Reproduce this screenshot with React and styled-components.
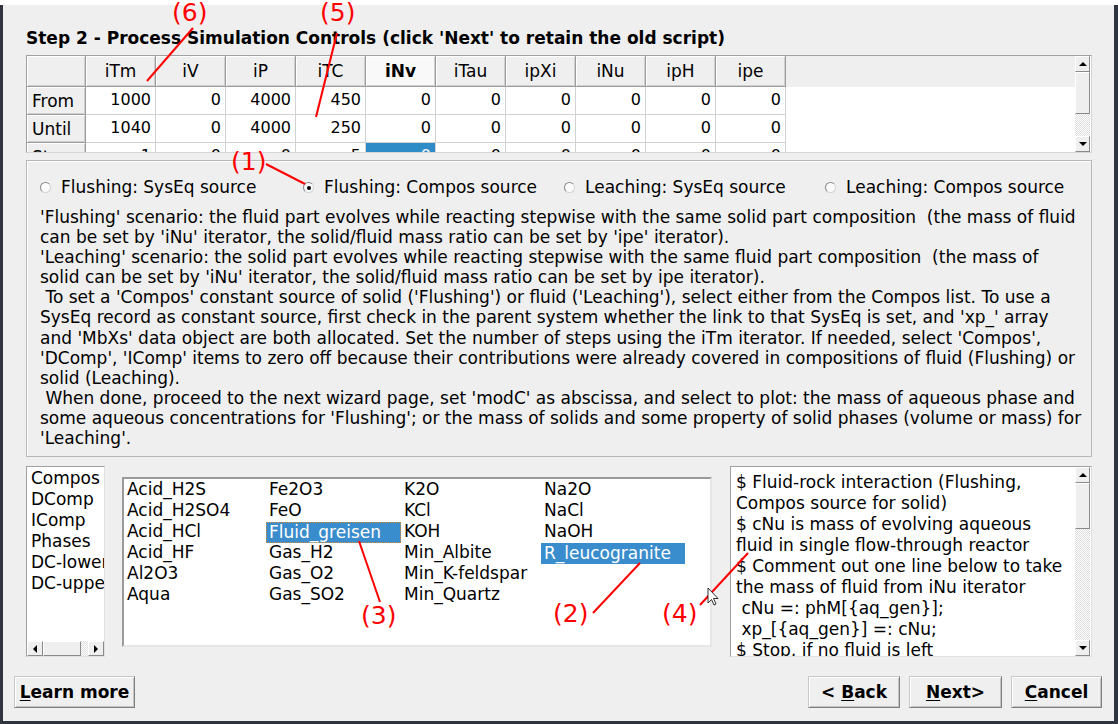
import React from "react";
import styled, { createGlobalStyle } from "styled-components";

const GlobalStyle = createGlobalStyle`
  html, body { margin: 0; padding: 0; }
  body {
    background: #2f343f;
    font-family: "DejaVu Sans", "Noto Sans", sans-serif;
    font-size: 17px;
    color: #000;
  }
`;

const columns = ["iTm", "iV", "iP", "iTC", "iNv", "iTau", "ipXi", "iNu", "ipH", "ipe"];
const rows = [
  { name: "From", values: [1000, 0, 4000, 450, 0, 0, 0, 0, 0, 0] },
  { name: "Until", values: [1040, 0, 4000, 250, 0, 0, 0, 0, 0, 0] },
  { name: "Step", values: [1, 0, 0, 5, 0, 0, 0, 0, 0, 0] },
];
const radios = [
  "Flushing: SysEq source",
  "Flushing: Compos source",
  "Leaching: SysEq source",
  "Leaching: Compos source",
];
const description = [
  "'Flushing' scenario: the fluid part evolves while reacting stepwise with the same solid part composition  (the mass of fluid",
  "can be set by 'iNu' iterator, the solid/fluid mass ratio can be set by 'ipe' iterator).",
  "'Leaching' scenario: the solid part evolves while reacting stepwise with the same fluid part composition  (the mass of",
  "solid can be set by 'iNu' iterator, the solid/fluid mass ratio can be set by ipe iterator).",
  " To set a 'Compos' constant source of solid ('Flushing') or fluid ('Leaching'), select either from the Compos list. To use a",
  "SysEq record as constant source, first check in the parent system whether the link to that SysEq is set, and 'xp_' array",
  "and 'MbXs' data object are both allocated. Set the number of steps using the iTm iterator. If needed, select 'Compos',",
  "'DComp', 'IComp' items to zero off because their contributions were already covered in compositions of fluid (Flushing) or",
  "solid (Leaching).",
  " When done, proceed to the next wizard page, set 'modC' as abscissa, and select to plot: the mass of aqueous phase and",
  "some aqueous concentrations for 'Flushing'; or the mass of solids and some property of solid phases (volume or mass) for",
  "'Leaching'.",
];
const kinds = ["Compos", "DComp", "IComp", "Phases", "DC-lower", "DC-upper"];
const records = [
  { width: 142, items: ["Acid_H2S", "Acid_H2SO4", "Acid_HCl", "Acid_HF", "Al2O3", "Aqua"] },
  { width: 135, items: ["Fe2O3", "FeO", "Fluid_greisen", "Gas_H2", "Gas_O2", "Gas_SO2"], selected: 2, focus: true },
  { width: 140, items: ["K2O", "KCl", "KOH", "Min_Albite", "Min_K-feldspar", "Min_Quartz"] },
  { width: 144, items: ["Na2O", "NaCl", "NaOH", "R_leucogranite"], selected: 3 },
];
const script = [
  "$ Fluid-rock interaction (Flushing,",
  "Compos source for solid)",
  "$ cNu is mass of evolving aqueous",
  "fluid in single flow-through reactor",
  "$ Comment out one line below to take",
  "the mass of fluid from iNu iterator",
  " cNu =: phM[{aq_gen}];",
  " xp_[{aq_gen}] =: cNu;",
  "$ Stop, if no fluid is left",
];
const marks = [
  { label: "(6)", x: 172, y: -2 },
  { label: "(5)", x: 320, y: -2 },
  { label: "(1)", x: 231, y: 147 },
  { label: "(3)", x: 361, y: 601 },
  { label: "(2)", x: 553, y: 599 },
  { label: "(4)", x: 662, y: 599 },
];
const leaders = [
  [193, 28, 147, 81],
  [337, 33, 316, 117],
  [266, 164, 305, 184],
  [359, 541, 380, 602],
  [640, 563, 593, 613],
  [748, 553, 700, 605],
];

const Screen = styled.div`
  position: relative;
  width: 1118px;
  height: 724px;
  overflow: hidden;
  background: #2f343f;
  display: flex;
  flex-direction: column;
`;
const TopStrip = styled.div`
  height: 5px;
  flex-shrink: 0;
  background: #ffffff;
`;
const Dialog = styled.div`
  flex: 1;
  margin: 0 4px 3px 3px;
  background: #efefef;
  display: flex;
  flex-direction: column;
`;
const Body = styled.div`
  padding: 0 22px 0 23px;
  display: flex;
  flex-direction: column;
`;
const Title = styled.div`
  margin-top: 24px;
  height: 26px;
  line-height: 19px;
  font-weight: bold;
  white-space: nowrap;
`;

/* ---- table ---- */
const TableFrame = styled.div`
  height: 98px;
  box-sizing: border-box;
  border: 1px solid;
  border-color: #a0a0a0 #d6d6d6 #d6d6d6 #a0a0a0;
  display: flex;
  background: #ffffff;
`;
const Grid = styled.div`
  flex: 1;
  overflow: hidden;
  display: grid;
  grid-template-columns: 59px repeat(10, 70px) 1fr;
  grid-template-rows: 31px 28px 28px 28px;
`;
const HeadCell = styled.div`
  box-sizing: border-box;
  background: ${p => (p.$current ? "#f9f9f9" : "#efefef")};
  font-weight: ${p => (p.$current ? "bold" : "normal")};
  border-right: 1px solid #9c9c9c;
  border-bottom: 1px solid #9c9c9c;
  box-shadow: inset 1px 1px 0 #ffffff, inset -1px -1px 0 #cfcfcf;
  display: flex;
  align-items: center;
  justify-content: ${p => (p.$left ? "flex-start" : "center")};
  padding-left: ${p => (p.$left ? "5px" : "0")};
  white-space: nowrap;
`;
const HeadFill = styled.div`
  background: #efefef;
`;
const DataCell = styled.div`
  box-sizing: border-box;
  font-size: 16px;
  background: ${p => (p.$selected ? "#308cc6" : "#ffffff")};
  color: ${p => (p.$selected ? "#ffffff" : "#000")};
  border-right: 1px solid #d2d2d2;
  border-bottom: 1px solid #d2d2d2;
  display: flex;
  align-items: center;
  justify-content: flex-end;
  padding-right: 4px;
  padding-bottom: 3px;
`;
const BodyFill = styled.div`
  background: #ffffff;
`;

/* ---- scroll bars ---- */
const Bar = styled.div`
  flex-shrink: 0;
  display: flex;
  flex-direction: ${p => (p.$horizontal ? "row" : "column")};
  width: ${p => (p.$horizontal ? "auto" : "15px")};
  height: ${p => (p.$horizontal ? "15px" : "auto")};
  margin: ${p => p.$margin || "0"};
  background: repeating-conic-gradient(#ffffff 0 25%, #dedede 0 50%) 0 0 / 2px 2px;
`;
const BarButton = styled.div`
  box-sizing: border-box;
  flex-shrink: 0;
  width: ${p => (p.$horizontal ? "16px" : "15px")};
  height: ${p => (p.$horizontal ? "15px" : "16px")};
  background: #efefef;
  border: 1px solid;
  border-color: #ffffff #8a8a8a #8a8a8a #ffffff;
  display: flex;
  align-items: center;
  justify-content: center;
`;
const Thumb = styled.div`
  box-sizing: border-box;
  flex-shrink: 0;
  width: ${p => (p.$horizontal ? `${p.$size}px` : "15px")};
  height: ${p => (p.$horizontal ? "15px" : `${p.$size}px`)};
  background: #efefef;
  border: 1px solid;
  border-color: #ffffff #8a8a8a #8a8a8a #ffffff;
`;
const Track = styled.div`
  flex: 1;
`;
const Arrow = styled.span`
  width: 0;
  height: 0;
  border-style: solid;
  border-color: transparent;
  ${p =>
    p.$dir === "up"
      ? "border-width: 0 4px 4px 4px; border-bottom-color: #000;"
      : p.$dir === "down"
      ? "border-width: 4px 4px 0 4px; border-top-color: #000;"
      : p.$dir === "left"
      ? "border-width: 4px 4px 4px 0; border-right-color: #000;"
      : "border-width: 4px 0 4px 4px; border-left-color: #000;"}
`;

const ScrollBar = ({ horizontal, thumb, margin }) => (
  <Bar $horizontal={horizontal} $margin={margin}>
    <BarButton $horizontal={horizontal}>
      <Arrow $dir={horizontal ? "left" : "up"} />
    </BarButton>
    <Thumb $horizontal={horizontal} $size={thumb} />
    <Track />
    <BarButton $horizontal={horizontal}>
      <Arrow $dir={horizontal ? "right" : "down"} />
    </BarButton>
  </Bar>
);

/* ---- radio group ---- */
const Group = styled.div`
  margin-top: 7px;
  height: 297px;
  box-sizing: border-box;
  border: 1px solid #b8b8b8;
  box-shadow: inset 1px 1px 0 #ffffff;
  padding: 17px 0 0 13px;
`;
const RadioRow = styled.div`
  display: grid;
  grid-template-columns: 263px 261px 261px 261px;
  line-height: 19px;
`;
const RadioItem = styled.label`
  display: flex;
  align-items: center;
  gap: 10px;
  white-space: nowrap;
`;
const RadioDot = styled.span`
  width: 11px;
  height: 11px;
  box-sizing: border-box;
  border-radius: 50%;
  border: 1px solid;
  border-color: #8a8a8a #d4d4d4 #d4d4d4 #8a8a8a;
  background: #fbfbfb;
  display: flex;
  align-items: center;
  justify-content: center;
  &::after {
    content: "";
    width: 4px;
    height: 4px;
    border-radius: 50%;
    background: ${p => (p.$checked ? "#000" : "transparent")};
  }
`;
const Desc = styled.div`
  margin-top: 10px;
  line-height: 20.1px;
  white-space: pre;
`;

/* ---- lists ---- */
const ListRow = styled.div`
  margin-top: 9px;
  height: 191px;
  display: flex;
  align-items: flex-start;
`;
const KindList = styled.div`
  width: 79px;
  height: 191px;
  box-sizing: border-box;
  border: 1px solid;
  border-color: #a0a0a0 #e0e0e0 #e0e0e0 #a0a0a0;
  background: #ffffff;
  display: flex;
  flex-direction: column;
  overflow: hidden;
`;
const KindItems = styled.div`
  flex: 1;
  padding: 1px 0 0 4px;
  line-height: 21px;
  white-space: nowrap;
  overflow: hidden;
`;
const RecordList = styled.div`
  margin: 11px 18px 0 17px;
  width: 590px;
  height: 170px;
  box-sizing: border-box;
  border: 2px solid;
  border-color: #9a9a9a #e6e6e6 #e6e6e6 #9a9a9a;
  background: #ffffff;
  display: flex;
  padding-top: 1px;
`;
const RecordColumn = styled.div`
  width: ${p => p.$width}px;
  display: flex;
  flex-direction: column;
`;
const RecordItem = styled.div`
  height: 21px;
  box-sizing: border-box;
  line-height: 19px;
  padding-left: ${p => (p.$selected ? "2px" : "3px")};
  white-space: nowrap;
  background: ${p => (p.$selected ? "#3a8dcc" : "transparent")};
  color: ${p => (p.$selected ? "#ffffff" : "#000")};
  border: ${p => (p.$focus ? "1px dotted #e08a2c" : p.$selected ? "1px solid #3a8dcc" : "none")};
`;
const ScriptBox = styled.div`
  flex: 1;
  height: 191px;
  box-sizing: border-box;
  border: 1px solid;
  border-color: #a0a0a0 #e0e0e0 #e0e0e0 #a0a0a0;
  background: #ffffff;
  display: flex;
`;
const ScriptText = styled.div`
  flex: 1;
  padding: 5px 0 0 5px;
  line-height: 21px;
  white-space: pre;
  overflow: hidden;
`;

/* ---- buttons ---- */
const ButtonRow = styled.div`
  margin-top: 19px;
  padding: 0 12px 0 11px;
  display: flex;
  align-items: center;
  gap: 9px;
`;
const Spring = styled.div`
  flex: 1;
`;
const Button = styled.button`
  width: ${p => p.$width}px;
  height: 32px;
  box-sizing: border-box;
  background: #efefef;
  border: 1px solid;
  border-color: #c8c8c8 #7e7e7e #7e7e7e #c8c8c8;
  box-shadow: inset 1px 1px 0 #ffffff, inset -1px -1px 0 #c4c4c4;
  font-family: "DejaVu Sans", sans-serif;
  font-size: 17px;
  font-weight: bold;
  color: #000;
  padding: 0;
  u {
    text-decoration-thickness: 1px;
    text-underline-offset: 2px;
  }
`;

/* ---- annotations ---- */
const Mark = styled.span`
  position: absolute;
  left: ${p => p.$x}px;
  top: ${p => p.$y}px;
  color: #ff0000;
  font-size: 25px;
  line-height: 30px;
  font-family: "DejaVu Sans", sans-serif;
`;
const Overlay = styled.svg`
  position: absolute;
  left: 0;
  top: 0;
  pointer-events: none;
`;

export default function App() {
  return (
    <>
      <GlobalStyle />
      <Screen>
        <TopStrip />
        <Dialog>
          <Body>
            <Title>Step 2 - Process Simulation Controls (click 'Next' to retain the old script)</Title>

            <TableFrame>
              <Grid>
                <HeadCell />
                {columns.map(c => (
                  <HeadCell key={c} $current={c === "iNv"}>
                    {c}
                  </HeadCell>
                ))}
                <HeadFill />
                {rows.map((r, ri) => (
                  <React.Fragment key={r.name}>
                    <HeadCell $left>{r.name}</HeadCell>
                    {r.values.map((v, ci) => (
                      <DataCell key={ci} $selected={ri === 2 && ci === 4}>
                        {v}
                      </DataCell>
                    ))}
                    <BodyFill />
                  </React.Fragment>
                ))}
              </Grid>
              <ScrollBar thumb={42} margin="0 1px 0 0" />
            </TableFrame>

            <Group>
              <RadioRow>
                {radios.map((r, i) => (
                  <RadioItem key={r}>
                    <RadioDot $checked={i === 1} />
                    {r}
                  </RadioItem>
                ))}
              </RadioRow>
              <Desc>
                {description.map((line, i) => (
                  <div key={i}>{line}</div>
                ))}
              </Desc>
            </Group>

            <ListRow>
              <KindList>
                <KindItems>
                  {kinds.map(k => (
                    <div key={k}>{k}</div>
                  ))}
                </KindItems>
                <ScrollBar horizontal thumb={38} />
              </KindList>
              <RecordList>
                {records.map((col, ci) => (
                  <RecordColumn key={ci} $width={col.width}>
                    {col.items.map((it, ii) => (
                      <RecordItem key={it} $selected={col.selected === ii} $focus={col.focus && col.selected === ii}>
                        {it}
                      </RecordItem>
                    ))}
                  </RecordColumn>
                ))}
              </RecordList>
              <ScriptBox>
                <ScriptText>
                  {script.map((line, i) => (
                    <div key={i}>{line}</div>
                  ))}
                </ScriptText>
                <ScrollBar thumb={46} margin="0 1px 0 0" />
              </ScriptBox>
            </ListRow>
          </Body>

          <ButtonRow>
            <Button $width={121}>
              <u>L</u>earn more
            </Button>
            <Spring />
            <Button $width={92}>
              &lt; <u>B</u>ack
            </Button>
            <Button $width={93}>
              <u>N</u>ext&gt;
            </Button>
            <Button $width={91}>
              <u>C</u>ancel
            </Button>
          </ButtonRow>
        </Dialog>

        {marks.map(m => (
          <Mark key={m.label} $x={m.x} $y={m.y}>
            {m.label}
          </Mark>
        ))}
        <Overlay width="1118" height="724">
          {leaders.map(([x1, y1, x2, y2], i) => (
            <line key={i} x1={x1} y1={y1} x2={x2} y2={y2} stroke="#ff0000" strokeWidth="2" />
          ))}
          <path
            d="M708 588 L708 603 L711.5 599.5 L714 605 L716 604 L713.5 598.5 L718 598.5 Z"
            fill="#ffffff"
            stroke="#000"
            strokeWidth="0.8"
          />
        </Overlay>
      </Screen>
    </>
  );
}
